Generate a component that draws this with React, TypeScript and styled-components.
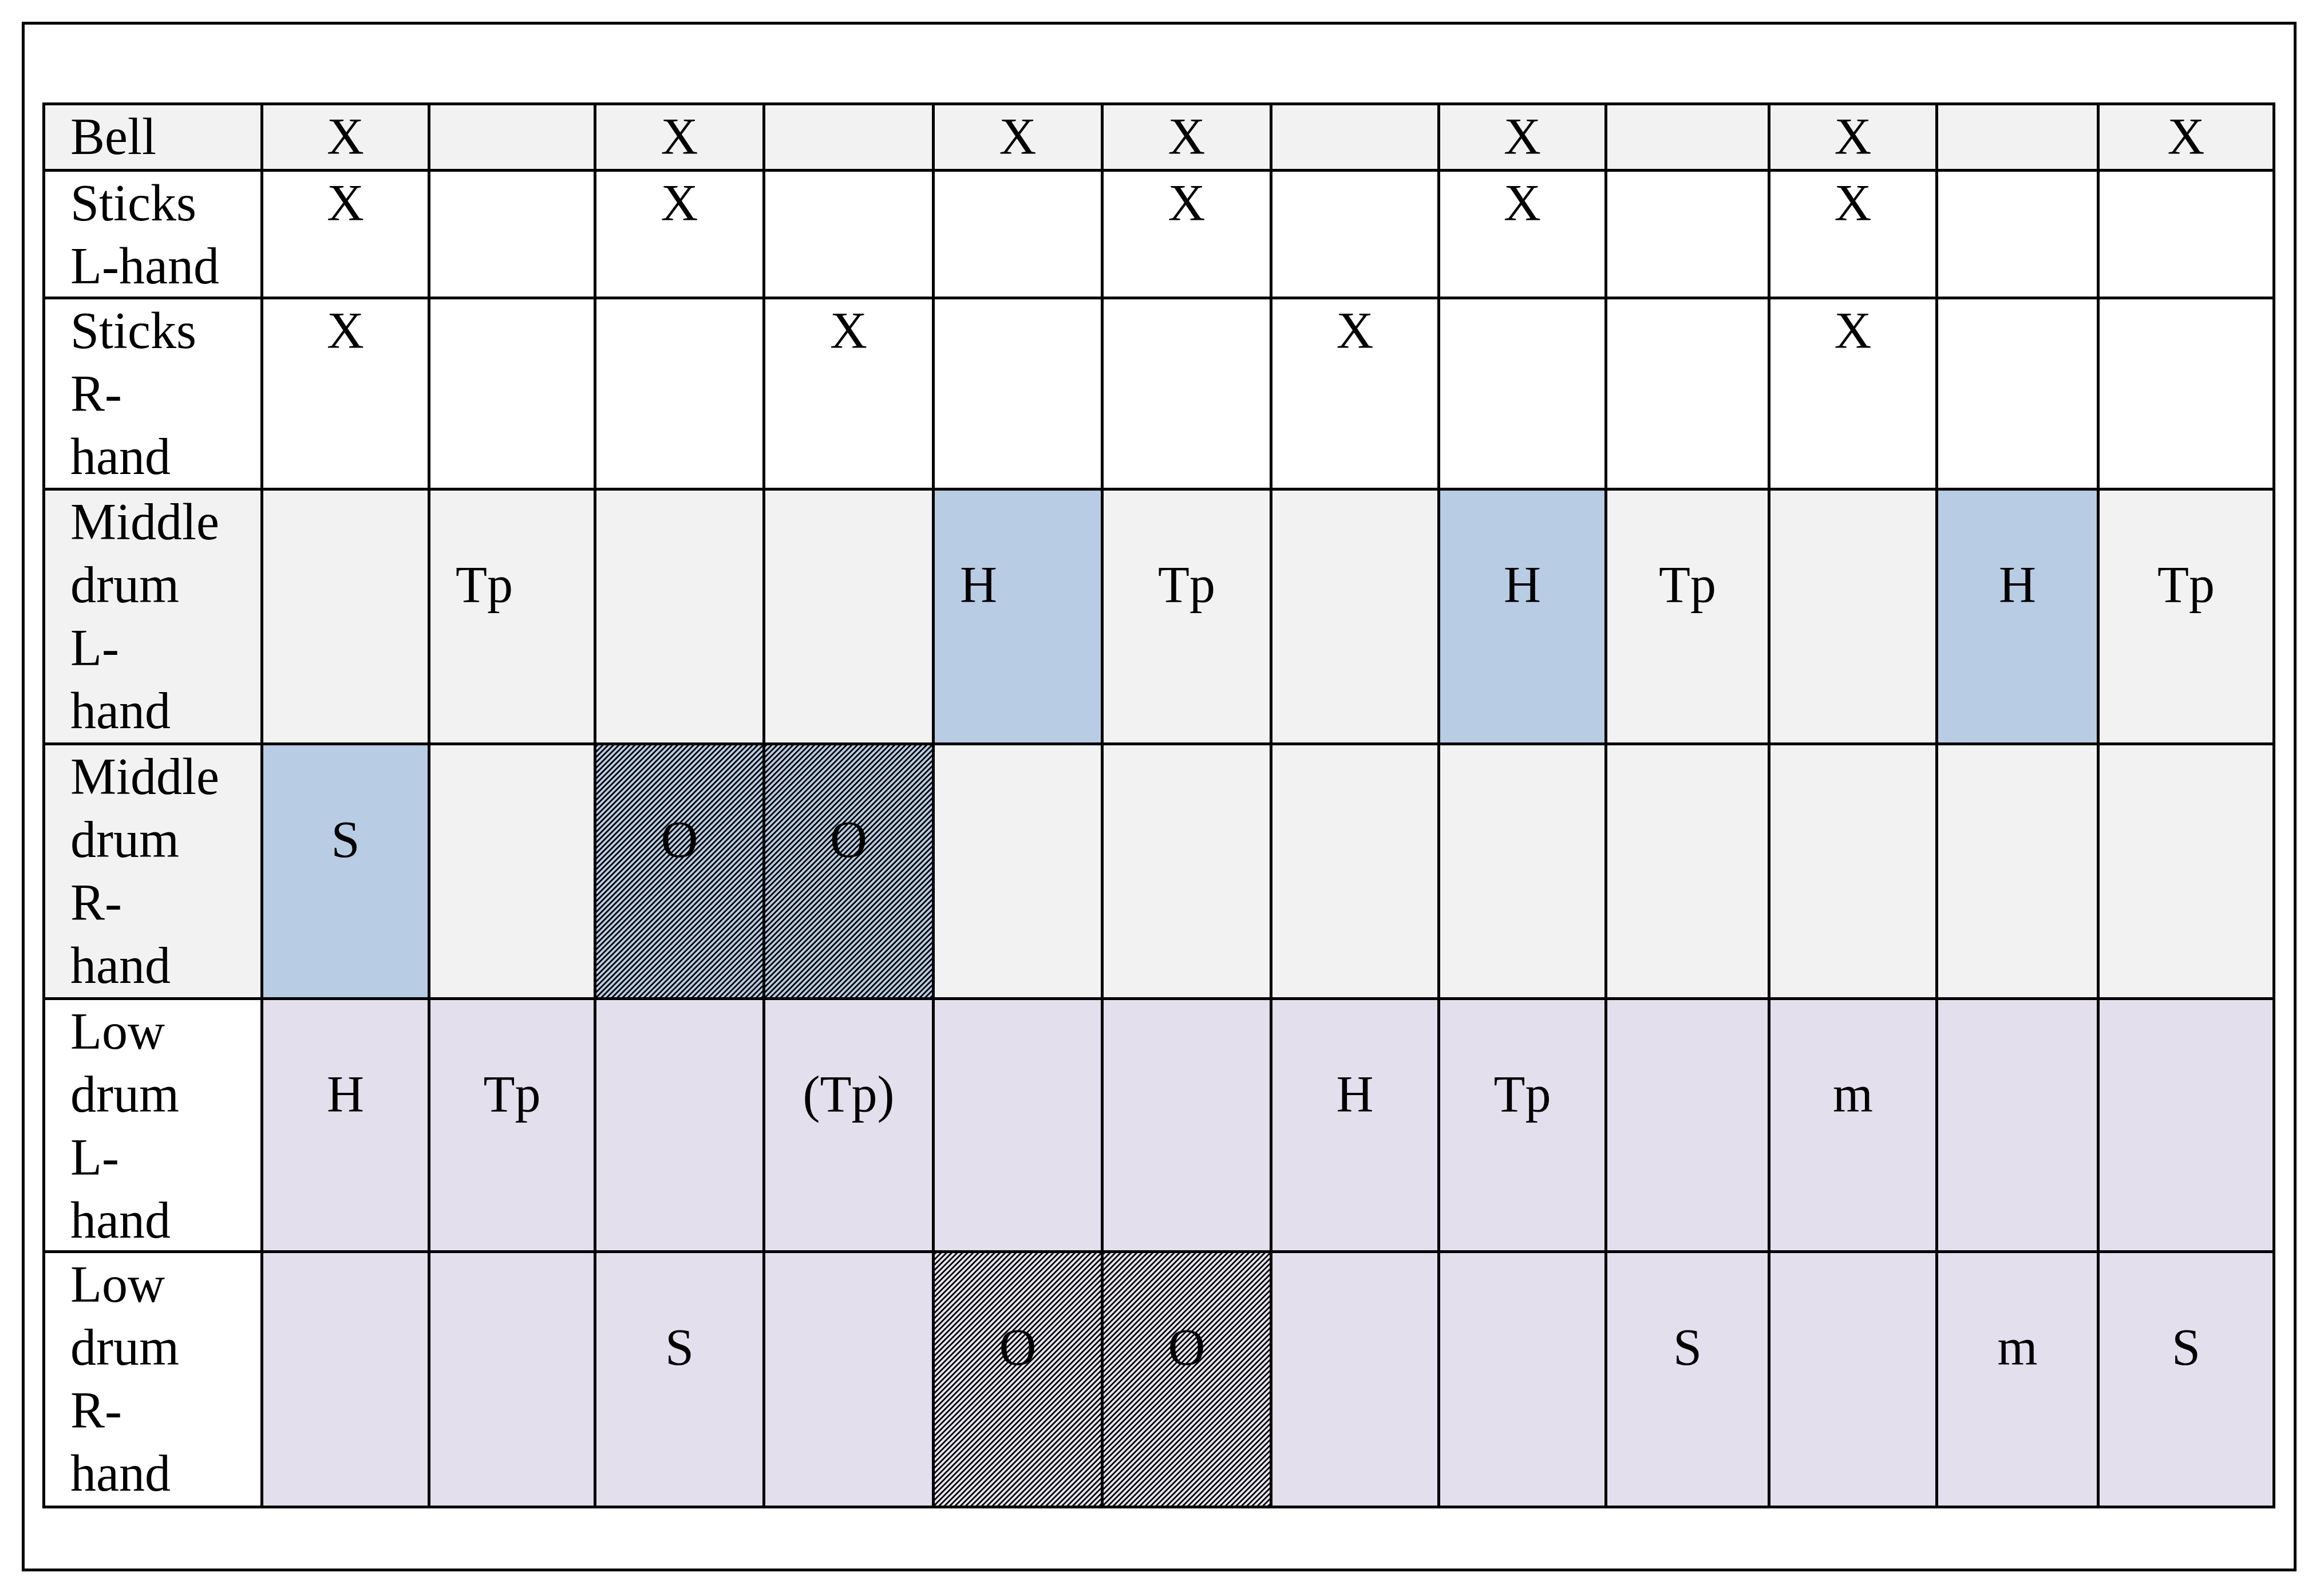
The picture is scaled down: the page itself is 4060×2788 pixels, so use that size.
import React from "react";
import styled, { createGlobalStyle, css } from "styled-components";

const GlobalStyle = createGlobalStyle`
  html, body {
    margin: 0;
    padding: 0;
    background: #ffffff;
  }
  body {
    font-family: "Liberation Serif", "Times New Roman", serif;
    color: #000;
  }
`;

type Tone = "gray" | "white" | "lav";
type Fill = "blue" | "hatchBlue" | "hatchLav";

interface CellData {
  t: string;
  align?: "left" | "center";
  fill?: Fill;
}

interface RowData {
  label: string[];
  labelTone: Tone;
  tone: Tone;
  offset: boolean;
  cells: Record<number, CellData>;
}

const toneColor: Record<Tone, string> = {
  gray: "#f2f2f2",
  white: "#ffffff",
  lav: "#e4dfec",
};

const LINE = 110;

const Page = styled.div`
  padding: 38px 0 0 38px;
`;

const Frame = styled.section`
  width: 3974px;
  box-sizing: border-box;
  border: 5px solid #000;
  padding: 136px 32px 105px 31px;
`;

const Grid = styled.div`
  display: grid;
  grid-template-columns: 376px 287px 285px 290px 291px 290px 290px 288px 287px 280px 288px 277px 302px;
  grid-template-rows: 111px 218px 329px 440px 440px 437px 441px;
  gap: 5px;
  padding: 5px;
  background: #000;
  width: max-content;
  font-size: 90px;
  line-height: ${LINE}px;
`;

const LabelCell = styled.div<{ $tone: Tone }>`
  background: ${(p) => toneColor[p.$tone]};
  padding-left: 44px;
  white-space: nowrap;
`;

const hatch = (light: string) => css`
  background: repeating-linear-gradient(
    135deg,
    #000 0px,
    #000 1.8px,
    ${light} 2.8px,
    ${light} 5.6px,
    #000 6.6px
  );
`;

const ValueCell = styled.div<{
  $tone: Tone;
  $fill?: Fill;
  $align: "left" | "center";
  $offset: boolean;
}>`
  background: ${(p) => toneColor[p.$tone]};
  ${(p) => p.$fill === "blue" && css`background: #b8cce4;`}
  ${(p) => p.$fill === "hatchBlue" && hatch("#b8cce4")}
  ${(p) => p.$fill === "hatchLav" && hatch("#e8e5f1")}
  text-align: ${(p) => p.$align};
  padding-top: ${(p) => (p.$offset ? LINE : 0)}px;
  padding-left: ${(p) => (p.$align === "left" ? 44 : 0)}px;
  white-space: nowrap;
`;

const rows: RowData[] = [
  {
    label: ["Bell"],
    labelTone: "gray",
    tone: "gray",
    offset: false,
    cells: {
      1: { t: "X" },
      3: { t: "X" },
      5: { t: "X" },
      6: { t: "X" },
      8: { t: "X" },
      10: { t: "X" },
      12: { t: "X" },
    },
  },
  {
    label: ["Sticks", "L-hand"],
    labelTone: "white",
    tone: "white",
    offset: false,
    cells: {
      1: { t: "X" },
      3: { t: "X" },
      6: { t: "X" },
      8: { t: "X" },
      10: { t: "X" },
    },
  },
  {
    label: ["Sticks", "R-", "hand"],
    labelTone: "white",
    tone: "white",
    offset: false,
    cells: {
      1: { t: "X" },
      4: { t: "X" },
      7: { t: "X" },
      10: { t: "X" },
    },
  },
  {
    label: ["Middle", "drum", "L-", "hand"],
    labelTone: "gray",
    tone: "gray",
    offset: true,
    cells: {
      2: { t: "Tp", align: "left" },
      5: { t: "H", align: "left", fill: "blue" },
      6: { t: "Tp" },
      8: { t: "H", fill: "blue" },
      9: { t: "Tp" },
      11: { t: "H", fill: "blue" },
      12: { t: "Tp" },
    },
  },
  {
    label: ["Middle", "drum", "R-", "hand"],
    labelTone: "gray",
    tone: "gray",
    offset: true,
    cells: {
      1: { t: "S", fill: "blue" },
      3: { t: "O", fill: "hatchBlue" },
      4: { t: "O", fill: "hatchBlue" },
    },
  },
  {
    label: ["Low", "drum", "L-", "hand"],
    labelTone: "white",
    tone: "lav",
    offset: true,
    cells: {
      1: { t: "H" },
      2: { t: "Tp" },
      4: { t: "(Tp)" },
      7: { t: "H" },
      8: { t: "Tp" },
      10: { t: "m" },
    },
  },
  {
    label: ["Low", "drum", "R-", "hand"],
    labelTone: "white",
    tone: "lav",
    offset: true,
    cells: {
      3: { t: "S" },
      5: { t: "O", fill: "hatchLav" },
      6: { t: "O", fill: "hatchLav" },
      9: { t: "S" },
      11: { t: "m" },
      12: { t: "S" },
    },
  },
];

const VALUE_COLS = Array.from({ length: 12 }, (_, i) => i + 1);

export default function App() {
  return (
    <>
      <GlobalStyle />
      <Page>
        <Frame>
          <Grid>
            {rows.map((row, ri) => (
              <React.Fragment key={ri}>
                <LabelCell $tone={row.labelTone}>
                  {row.label.map((line, li) => (
                    <React.Fragment key={li}>
                      {li > 0 && <br />}
                      {line}
                    </React.Fragment>
                  ))}
                </LabelCell>
                {VALUE_COLS.map((c) => {
                  const cell = row.cells[c];
                  return (
                    <ValueCell
                      key={c}
                      $tone={row.tone}
                      $fill={cell?.fill}
                      $align={cell?.align ?? "center"}
                      $offset={row.offset}
                    >
                      {cell?.t ?? ""}
                    </ValueCell>
                  );
                })}
              </React.Fragment>
            ))}
          </Grid>
        </Frame>
      </Page>
    </>
  );
}
